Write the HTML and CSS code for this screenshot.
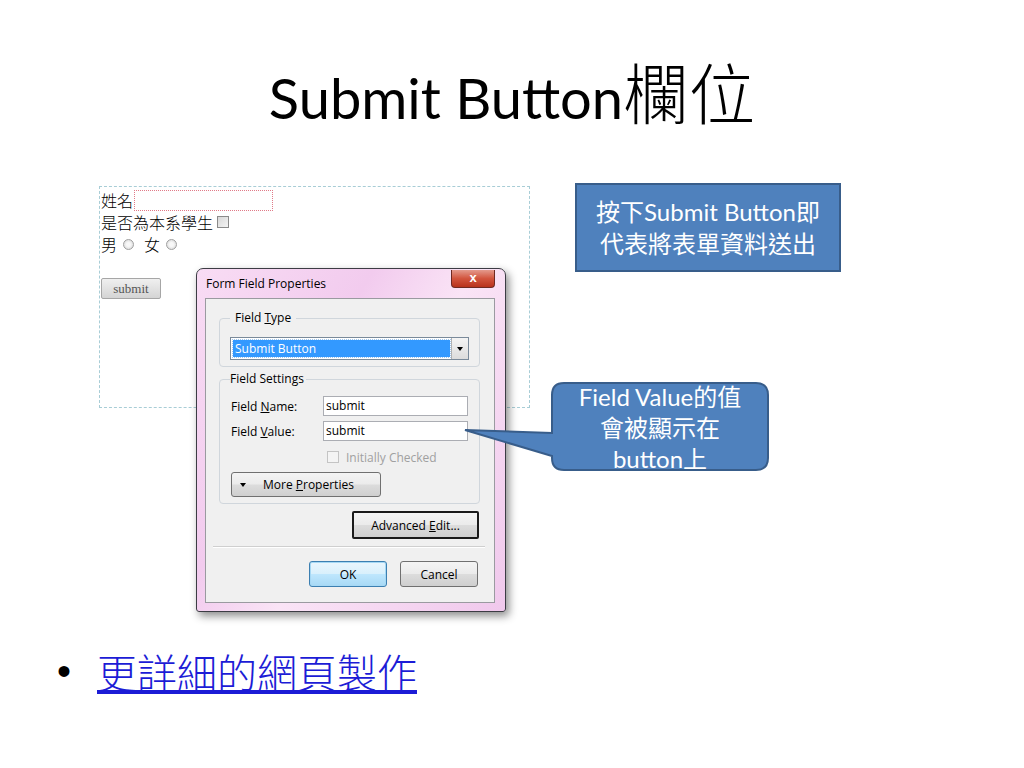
FILE: index.html
```html
<!DOCTYPE html>
<html lang="zh-TW">
<head>
    <meta charset="UTF-8">
    <title>Submit Button欄位</title>
    <link rel="stylesheet" href="styles.css">
</head>
<body>
    <div class="slide">
        <h1 class="title">Submit Button<span class="cjk">欄位</span></h1>

        <div class="stage">
            <!-- 網頁表單截圖 -->
            <div class="webform">
                <div class="wf-row">姓名<span class="wf-input"></span></div>
                <div class="wf-row">是否為本系學生<span class="wf-check"></span></div>
                <div class="wf-row">男<span class="wf-radio"></span>女<span class="wf-radio"></span></div>
                <div class="wf-submit">submit</div>
            </div>

            <!-- Form Field Properties 對話框 -->
            <div class="dialog">
                <div class="dialog-bar">
                    Form Field Properties
                    <span class="dialog-close">x</span>
                </div>
                <div class="dialog-client">
                    <fieldset class="group group-type">
                        <legend>Field <u>T</u>ype</legend>
                        <div class="combo">
                            <span class="combo-value">Submit Button</span>
                            <span class="combo-drop"><i class="tri"></i></span>
                        </div>
                    </fieldset>
                    <fieldset class="group group-settings">
                        <legend>Field Settings</legend>
                        <div class="field-row">
                            <label>Field <u>N</u>ame:</label>
                            <span class="textbox">submit</span>
                        </div>
                        <div class="field-row">
                            <label>Field <u>V</u>alue:</label>
                            <span class="textbox">submit</span>
                        </div>
                        <div class="check-row"><span class="check-box"></span><span>Initially Checked</span></div>
                        <div class="btn btn-more"><i class="tri"></i><span>More <u>P</u>roperties</span></div>
                    </fieldset>
                    <div class="btn-line">
                        <div class="btn btn-advanced"><span>Advanced <u>E</u>dit...</span></div>
                    </div>
                    <div class="separator"></div>
                    <div class="btn-line btn-line-bottom">
                        <div class="btn btn-ok">OK</div>
                        <div class="btn btn-cancel">Cancel</div>
                    </div>
                </div>
            </div>

            <div class="note">按下Submit Button即<br>代表將表單資料送出</div>

            <div class="callout">
                <svg width="312" height="100" viewBox="0 0 312 100">
                    <path d="M104,7 H296 Q308,7 308,19 V82 Q308,94 296,94 H104 Q92,94 92,82 V80 L5,54 L92,57 V19 Q92,7 104,7 Z"
                          fill="#4f81bd" stroke="#385d8a" stroke-width="2"/>
                </svg>
                <div class="callout-text">Field Value的值<br>會被顯示在<br>button上</div>
            </div>
        </div>

        <ul class="bullets">
            <li><a href="#">更詳細的網頁製作</a></li>
        </ul>
    </div>
</body>
</html>
```

FILE: styles.css
```css
body {
    margin: 0;
    background-color: #fff;
}
.slide {
    width: 1024px;
    height: 768px;
    position: relative;
    overflow: hidden;
    font-family: Lato, "Noto Sans CJK TC", sans-serif;
    color: #000;
}
.title {
    margin: 0;
    height: 160px;
    box-sizing: border-box;
    padding-top: 50px;
    text-align: center;
    font-size: 56px;
    font-weight: 400;
    line-height: 80px;
}
.title .cjk {
    font-family: "Noto Sans CJK TC", sans-serif;
    font-size: 66px;
    font-weight: 300;
}
.stage {
    position: relative;
    height: 470px;
}

/* 網頁表單 */
.webform {
    position: absolute;
    left: 99px;
    top: 26px;
    width: 431px;
    height: 222px;
    box-sizing: border-box;
    border: 1px dashed #a8cdd6;
    padding: 2px 0 0 1px;
    font-family: "Noto Sans CJK TC", serif;
    font-size: 16px;
    font-weight: 300;
}
.wf-row {
    display: flex;
    align-items: center;
    height: 22px;
}
.wf-input {
    width: 137px;
    height: 19px;
    margin-left: 1px;
    border: 1px dotted #e07a88;
    background-color: #fff;
}
.wf-check {
    width: 10px;
    height: 10px;
    margin-left: 4px;
    border: 1px solid #8a8a8a;
    background: linear-gradient(135deg, #d8d8d8, #f4f4f4);
}
.wf-radio {
    width: 9px;
    height: 9px;
    margin: 0 10px 0 6px;
    border: 1px solid #a0a0a0;
    border-radius: 50%;
    background: radial-gradient(circle, #f8f8f8 30%, #d0d0d0);
}
.wf-submit {
    width: 58px;
    height: 19px;
    margin-top: 23px;
    border: 1px solid #a6a6a6;
    border-radius: 2px;
    background: linear-gradient(#f0f0f0, #d4d4d4);
    font-family: "Liberation Serif", serif;
    font-size: 13px;
    line-height: 19px;
    text-align: center;
    color: #555;
}

/* 對話框 */
.dialog {
    position: absolute;
    left: 196px;
    top: 108px;
    width: 310px;
    height: 344px;
    box-sizing: border-box;
    display: flex;
    flex-direction: column;
    border: 1px solid #3c3c44;
    border-radius: 7px 7px 3px 3px;
    background: linear-gradient(120deg, #f8dcf4, #f2cbee 35%, #fae4f6 55%, #f0c8ec);
    box-shadow: 3px 4px 8px rgba(0, 0, 0, 0.45);
    font-family: "Open Sans", sans-serif;
    font-size: 12px;
    color: #000;
}
.dialog-bar {
    position: relative;
    height: 29px;
    display: flex;
    align-items: center;
    padding-left: 9px;
}
.dialog-close {
    position: absolute;
    top: 1px;
    right: 10px;
    width: 42px;
    height: 17px;
    border: 1px solid #6e2a22;
    border-top: none;
    border-radius: 0 0 4px 4px;
    background: linear-gradient(#e49a8c, #d2553e 50%, #b8321c);
    color: #fff;
    font-family: "Liberation Sans", sans-serif;
    font-weight: bold;
    font-size: 13px;
    line-height: 15px;
    text-align: center;
}
.dialog-client {
    flex: 1;
    margin: 0 10px 8px 8px;
    border: 1px solid #9a9aa0;
    background-color: #f0f0f0;
}
.group {
    margin: 0 0 0 13px;
    width: 261px;
    box-sizing: border-box;
    border: 1px solid #d0d6dc;
    border-radius: 4px;
    padding: 0 10px 6px 10px;
}
.group legend {
    padding: 0 5px;
    line-height: 16px;
}
.group-type {
    margin-top: 11px;
}
.group-settings {
    margin-top: 4px;
    padding-bottom: 6px;
}
.group-settings legend {
    padding: 0 2px 0 0;
}
.combo {
    display: flex;
    height: 23px;
    margin-top: 11px;
    box-sizing: border-box;
    border: 1px solid #7a8a9a;
    background-color: #fff;
    padding: 2px 0 2px 2px;
}
.combo-value {
    flex: 1;
    background-color: #3399ff;
    color: #fff;
    line-height: 17px;
    padding-left: 2px;
    outline: 1px dotted #a0c8f0;
}
.combo-drop {
    width: 16px;
    margin: -2px 0 -2px 1px;
    border-left: 1px solid #b0b0b0;
    background: linear-gradient(#f4f4f4, #dcdcdc);
    display: flex;
    align-items: center;
    justify-content: center;
}
.tri {
    width: 0;
    height: 0;
    border-left: 3.5px solid transparent;
    border-right: 3.5px solid transparent;
    border-top: 4px solid #000;
}
.field-row {
    display: flex;
    align-items: center;
    height: 20px;
    margin-top: 5px;
    padding-left: 1px;
}
.field-row:first-of-type {
    margin-top: 9px;
}
.field-row label {
    width: 92px;
}
.textbox {
    width: 145px;
    height: 20px;
    box-sizing: border-box;
    border: 1px solid #abadb3;
    background-color: #fff;
    padding-left: 2px;
    line-height: 18px;
}
.check-row {
    display: flex;
    align-items: center;
    height: 20px;
    margin-top: 6px;
    padding-left: 97px;
    color: #a0a0a0;
}
.check-box {
    width: 10px;
    height: 10px;
    margin-right: 7px;
    border: 1px solid #c4c4c4;
    background-color: #f4f4f4;
}
.btn {
    box-sizing: border-box;
    display: flex;
    align-items: center;
    justify-content: center;
    border: 1px solid #707070;
    border-radius: 3px;
    background: linear-gradient(#f4f4f4, #ebebeb 48%, #dcdcdc 52%, #cfcfcf);
}
.btn-more {
    width: 150px;
    height: 25px;
    margin-top: 5px;
    margin-left: 1px;
    justify-content: flex-start;
    padding-left: 8px;
}
.btn-more .tri {
    margin-right: 17px;
}
.btn-line {
    display: flex;
    justify-content: flex-end;
    gap: 13px;
    padding-right: 15px;
    margin-top: 7px;
}
.btn-advanced {
    width: 127px;
    height: 28px;
    border: 2px solid #1a1a1a;
    border-radius: 2px;
}
.separator {
    height: 0;
    margin: 7px 9px 0 7px;
    border-top: 1px solid #cfcfcf;
    border-bottom: 1px solid #fff;
}
.btn-line-bottom {
    margin-top: 13px;
    padding-right: 16px;
}
.btn-ok,
.btn-cancel {
    width: 78px;
    height: 26px;
}
.btn-ok {
    border-color: #3c7fb1;
    box-shadow: 0 0 0 1px #a6d8f4 inset;
    background: linear-gradient(#eaf6fd, #d9f0fc 48%, #bee6fd 52%, #a7d9f5);
}

/* 說明框 */
.note {
    position: absolute;
    left: 575px;
    top: 23px;
    width: 266px;
    height: 89px;
    box-sizing: border-box;
    border: 2px solid #385d8a;
    background-color: #4f81bd;
    color: #fff;
    font-size: 24px;
    line-height: 32px;
    display: flex;
    align-items: center;
    justify-content: center;
    text-align: center;
}
.callout {
    position: absolute;
    left: 460px;
    top: 216px;
    width: 312px;
    height: 100px;
}
.callout svg {
    display: block;
}
.callout-text {
    position: absolute;
    left: 92px;
    top: 5px;
    width: 216px;
    text-align: center;
    color: #fff;
    font-size: 24px;
    line-height: 31px;
}

/* 項目符號 */
.bullets {
    list-style: none;
    margin: 0;
    padding: 13px 0 0 97px;
    font-family: "Noto Sans CJK TC", sans-serif;
    font-size: 40px;
    line-height: 56px;
}
.bullets li {
    position: relative;
}
.bullets li::before {
    content: "•";
    position: absolute;
    left: -40px;
    font-family: "Liberation Sans", sans-serif;
}
.bullets a {
    color: #1c1cd6;
    font-weight: 300;
}
```
